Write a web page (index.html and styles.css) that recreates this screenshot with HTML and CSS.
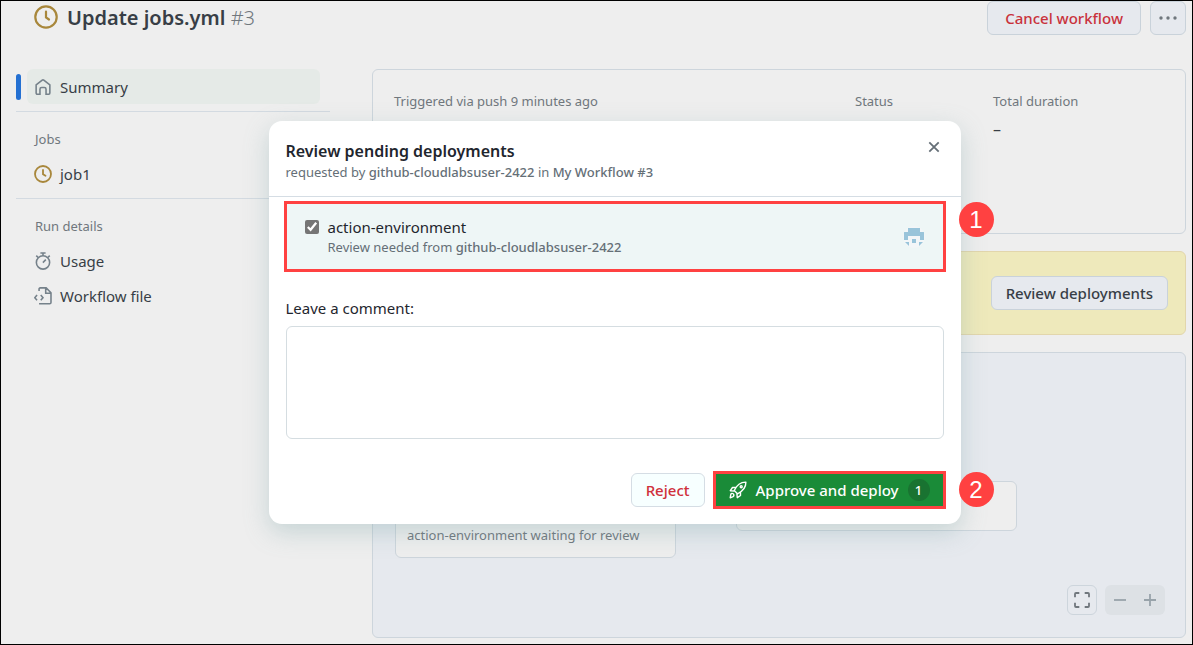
FILE: index.html
```html
<!DOCTYPE html>
<html lang="en">
<head>
<meta charset="utf-8">
<meta name="viewport" content="width=device-width, initial-scale=1">
<title>Update jobs.yml #3</title>
<link rel="stylesheet" href="styles.css">
</head>
<body>
<div class="page">
  <header class="run-header">
    <svg class="clock clock-large" viewBox="0 0 24 24" aria-hidden="true"><circle cx="12" cy="12" r="10.7"/><path d="M12 6.5v6l3 2"/></svg>
    <h1 class="run-title">Update jobs.yml <span class="run-number">#3</span></h1>
    <button class="btn btn-danger" type="button">Cancel workflow</button>
    <button class="btn btn-more" type="button" aria-label="More options"><svg viewBox="0 0 18 18" width="18" height="18" aria-hidden="true"><circle cx="2" cy="9" r="1.7"/><circle cx="9" cy="9" r="1.7"/><circle cx="16" cy="9" r="1.7"/></svg></button>
  </header>
  <div class="run-body">
    <nav class="sidebar" aria-label="Run">
      <div class="nav-group">
        <a class="nav-item nav-current" href="#summary"><svg class="icon" viewBox="0 0 16 16" aria-hidden="true"><path d="M1.9 6.2 7.3 1.9a1.1 1.1 0 0 1 1.4 0l5.4 4.3v7.2a1 1 0 0 1-1 1h-2.4V10a1.5 1.5 0 0 0-1.5-1.5H6.8A1.5 1.5 0 0 0 5.3 10v4.4H2.9a1 1 0 0 1-1-1z"/></svg>Summary</a>
      </div>
      <div class="nav-group">
        <h2 class="nav-heading">Jobs</h2>
        <a class="nav-item" href="#job1"><svg class="clock" viewBox="0 0 18 18" aria-hidden="true"><circle cx="9" cy="9" r="8"/><path d="M9 5v4.2l2.5 1.6"/></svg>job1</a>
      </div>
      <div class="nav-group">
        <h2 class="nav-heading">Run details</h2>
        <a class="nav-item" href="#usage"><svg class="icon" viewBox="0 0 16 16" aria-hidden="true"><circle cx="8" cy="9.3" r="5.9"/><path d="M5.7.9h4.6M8 .9v2.5M12.3 4.9l1.7-1.7M3.7 4.9 2 3.2M7.9 9.4l2.6-2.6"/></svg>Usage</a>
        <a class="nav-item" href="#file"><svg class="icon" viewBox="0 0 16 16" aria-hidden="true"><path d="M4.5 3.6V1.8c0-.6.4-1 1-1h5.3l4.3 4.3v8.6c0 .7-.5 1.2-1.2 1.2H4.5M10.4 1v4.5h4.5M2.7 7.2.7 9.5l2 2.3M6 7.2l2 2.3-2 2.3"/></svg>Workflow file</a>
      </div>
    </nav>
    <main class="main">
      <section class="card overview">
        <div class="fact">Triggered via push 9 minutes ago</div>
        <div class="fact">Status</div>
        <div class="fact">Total duration<span class="fact-value">–</span></div>
      </section>
      <section class="card notice"><button class="btn" type="button">Review deployments</button></section>
      <section class="card graph">
        <div class="node node-first">action-environment waiting for review</div>
        <div class="node node-second"></div>
        <div class="graph-tools">
          <button class="fit" type="button" aria-label="Fit to window"><svg viewBox="0 0 16 16" width="16" height="16" aria-hidden="true"><path d="M1 5.3V2a1 1 0 0 1 1-1h3.3M10.7 1H14a1 1 0 0 1 1 1v3.3M15 10.7V14a1 1 0 0 1-1 1h-3.3M5.3 15H2a1 1 0 0 1-1-1v-3.3"/></svg></button>
          <div class="zoom">
            <button type="button" aria-label="Zoom out"><svg viewBox="0 0 14 14" width="14" height="14" aria-hidden="true"><path d="M1 7h12"/></svg></button>
            <button type="button" aria-label="Zoom in"><svg viewBox="0 0 14 14" width="14" height="14" aria-hidden="true"><path d="M1 7h12M7 1v12"/></svg></button>
          </div>
        </div>
      </section>
    </main>
  </div>
  <div class="overlay">
    <form class="dialog" role="dialog" aria-labelledby="dialog-title">
      <header class="dialog-header">
        <div>
          <h2 class="dialog-title" id="dialog-title">Review pending deployments</h2>
          <p class="dialog-sub">requested by <strong>github-cloudlabsuser-2422</strong> in <strong>My Workflow #3</strong></p>
        </div>
        <button class="close" type="button" aria-label="Close"><svg viewBox="0 0 12 12" width="12" height="12" aria-hidden="true"><path d="m1.3 1.3 9.4 9.4M10.7 1.3l-9.4 9.4"/></svg></button>
      </header>
      <div class="dialog-body">
        <div class="environment marked">
          <input class="check" id="env" type="checkbox" checked>
          <div class="environment-text">
            <label class="environment-name" for="env">action-environment</label>
            <p class="environment-sub">Review needed from <strong>github-cloudlabsuser-2422</strong></p>
          </div>
          <svg class="avatar" viewBox="0 0 22 22" aria-hidden="true"><circle class="avatar-back" cx="11" cy="11" r="11"/><path d="M5 2h12v4h4v8h-4v-4H5v4H1V6h4zM9 13h4v4H9zM2 16h4v4zM20 16h-4v4z"/></svg>
          <span class="step step-top">1</span>
        </div>
        <label class="comment-label" for="comment">Leave a comment:</label>
        <textarea class="comment" id="comment"></textarea>
        <div class="actions">
          <button class="btn btn-reject" type="button">Reject</button>
          <button class="btn btn-approve marked" type="button">
            <svg class="rocket" viewBox="0 0 18 18" aria-hidden="true"><path d="M5.2 9.5C7.5 4.500 11.500 1 16.900 1.100 17 6.500 13.500 10.500 8.500 12.800zM6.800 6.500H3.500L1.300 9.700l3.900.4M11.500 11.200v3.300l-3.200 2.200-.4-3.900M1.200 16.800l.6-3.500c.3-1.300 2.400-1.200 2.900.1.400 1-.2 2-1.200 2.500z"/><circle cx="12.200" cy="5.800" r="1"/></svg>
            Approve and deploy<span class="count">1</span><span class="step">2</span>
          </button>
        </div>
      </div>
    </form>
  </div>
</div>
</body>
</html>
```
FILE: styles.css
```css
* { box-sizing: border-box; }
body {
  margin: 0;
  font-family: "Noto Sans", "Open Sans", sans-serif;
  font-size: 15px;
  line-height: 20px;
  color: #383e46;
  background: #eeeeee;
}
h1, h2, p { margin: 0; }
strong { font-weight: 500; }
button, textarea { font: inherit; }
button { cursor: pointer; }
a { color: inherit; text-decoration: none; }
svg { flex: none; fill: none; stroke: currentColor; }

.page {
  position: relative;
  display: flex;
  flex-direction: column;
  min-height: 100vh;
  padding-bottom: 6px;
  border: 1px solid #000;
}
.run-header {
  display: flex;
  align-items: center;
  gap: 9px;
  padding: 0 6px 0 33px;
}
.run-title {
  flex: 1;
  font-size: 20px;
  line-height: 34px;
  font-weight: 600;
}
.run-number { font-weight: 300; color: #70777d; }
.clock { width: 18px; height: 18px; color: #a8873b; stroke-width: 1.8; stroke-linecap: round; }
.clock-large { width: 24px; height: 24px; margin-bottom: 2px; stroke-width: 2.2; }
.btn {
  display: flex;
  align-items: center;
  justify-content: center;
  height: 34px;
  padding: 0 14px;
  border: 1px solid #c9d2da;
  border-radius: 6px;
  background: #e6e9ee;
  color: #383e46;
  font-weight: 500;
  white-space: nowrap;
}
.btn-danger { padding: 0 17px; color: #c9323c; }
.btn-more { padding: 0 8px; color: #70777d; }
.btn-more svg { fill: currentColor; stroke: none; }

.run-body {
  display: grid;
  grid-template-columns: 314px 1fr;
  gap: 42px;
  flex: 1;
  padding: 34px 6px 0 15px;
}
.nav-group { padding: 17px 0 7px 11px; border-bottom: 1px solid #d3dae1; }
.nav-group:first-child { padding-top: 0; }
.nav-group:last-child { border: 0; }
.nav-heading {
  padding: 0 8px 7px;
  font-size: 13px;
  line-height: 20px;
  font-weight: 400;
  color: #70777d;
}
.nav-item {
  position: relative;
  display: flex;
  align-items: center;
  gap: 8px;
  height: 35px;
  margin-right: 10px;
  padding: 0 7px;
  border-radius: 6px;
}
.nav-current { background: #e5eae7; }
.nav-current::before {
  content: "";
  position: absolute;
  left: -11px;
  width: 5px;
  height: 26px;
  border-radius: 3px;
  background: #2470d2;
}
.icon { width: 18px; height: 18px; color: #75818a; stroke-width: 1.4; }

.main { display: flex; flex-direction: column; gap: 17px; }
.card { border: 1px solid #cdd5dc; border-radius: 6px; }
.overview {
  display: grid;
  grid-template-columns: 461px 138px 1fr;
  min-height: 165px;
  padding: 21px;
}
.fact { display: flex; flex-direction: column; gap: 8px; font-size: 13px; color: #70777d; }
.fact-value { font-size: 16px; color: #383e46; }
.notice {
  display: flex;
  align-items: center;
  justify-content: flex-end;
  min-height: 84px;
  padding: 0 17px;
  border-color: #e2d6ac;
  background: #eee9bb;
}
.graph { position: relative; flex: 1; min-height: 280px; background: #e6e9ee; }
.node {
  position: absolute;
  width: 281px;
  border: 1px solid #cdd5dc;
  border-radius: 6px;
  background: #eeeeee;
  font-size: 13px;
  color: #70777d;
}
.node-first { left: 22px; top: 128px; padding: 43px 11px 12px; }
.node-second { left: 363px; top: 128px; height: 50px; }
.graph-tools { position: absolute; right: 20px; bottom: 22px; display: flex; gap: 8px; }
.fit, .zoom button {
  display: grid;
  place-items: center;
  width: 30px;
  height: 30px;
  padding: 0;
  border: 1px solid #cdd5dc;
  border-radius: 6px;
  background: transparent;
  color: #70777d;
  stroke-width: 1.8;
}
.zoom { display: flex; border-radius: 6px; background: #dde1e5; }
.zoom button { border: 0; color: #98a3aa; }

.overlay {
  position: absolute;
  inset: 0;
  display: grid;
  place-items: center;
  padding-left: 36px;
}
.dialog {
  width: 692px;
  border-radius: 13px;
  background: #fff;
  box-shadow: 0 8px 24px rgba(120, 160, 165, 0.34);
  color: #1f262e;
}
.dialog-header {
  display: flex;
  align-items: flex-start;
  justify-content: space-between;
  padding: 19px 17px 14px;
  border-bottom: 1px solid #d5dde4;
}
.dialog-title { font-size: 16px; line-height: 22px; font-weight: 600; }
.dialog-sub, .environment-sub { font-size: 13px; line-height: 20px; color: #656f77; }
.close {
  display: grid;
  place-items: center;
  width: 20px;
  height: 14px;
  padding: 0;
  border: 0;
  background: none;
  color: #656f77;
  stroke-width: 1.8;
}
.dialog-body { padding: 6px 17px 17px; }
.marked { position: relative; outline: 3px solid #ff4141; outline-offset: -1px; }
.environment {
  display: flex;
  align-items: center;
  gap: 9px;
  height: 67px;
  padding: 0 19px;
  background: #eef6f6;
}
.check {
  align-self: flex-start;
  width: 14px;
  height: 14px;
  margin: 17px 0 0;
  accent-color: #757575;
}
.environment-text { flex: 1; }
.environment-name { display: block; }
.avatar { width: 22px; height: 22px; border-radius: 50%; fill: #99c4da; stroke: none; }
.avatar-back { fill: #f3f6f8; }
.step {
  position: absolute;
  left: calc(100% + 15px);
  top: calc(50% - 18px);
  display: grid;
  place-items: center;
  width: 35px;
  height: 35px;
  border-radius: 50%;
  background: #ff4141;
  color: #fff;
  font: 24px/35px "Liberation Sans", Arial, sans-serif;
}
.step-top { top: -1px; }
.comment-label { display: block; padding: 28px 0 8px; }
.comment {
  display: block;
  width: 100%;
  height: 113px;
  padding: 8px 12px;
  border: 1px solid #d5dde1;
  border-radius: 6px;
  background: #fff;
  resize: none;
}
.actions { display: flex; justify-content: flex-end; gap: 10px; padding-top: 34px; }
.btn-reject { background: #f7ffff; color: #d0303b; border-color: #d5dde4; }
.btn-approve {
  gap: 9px;
  border: 0;
  border-radius: 0;
  background: #1a8b38;
  color: #fff;
}
.rocket { width: 18px; height: 18px; stroke-width: 1.4; stroke-linejoin: round; }
.count {
  width: 22px;
  height: 22px;
  border-radius: 50%;
  background: #197331;
  font-size: 13px;
  line-height: 22px;
}
```
